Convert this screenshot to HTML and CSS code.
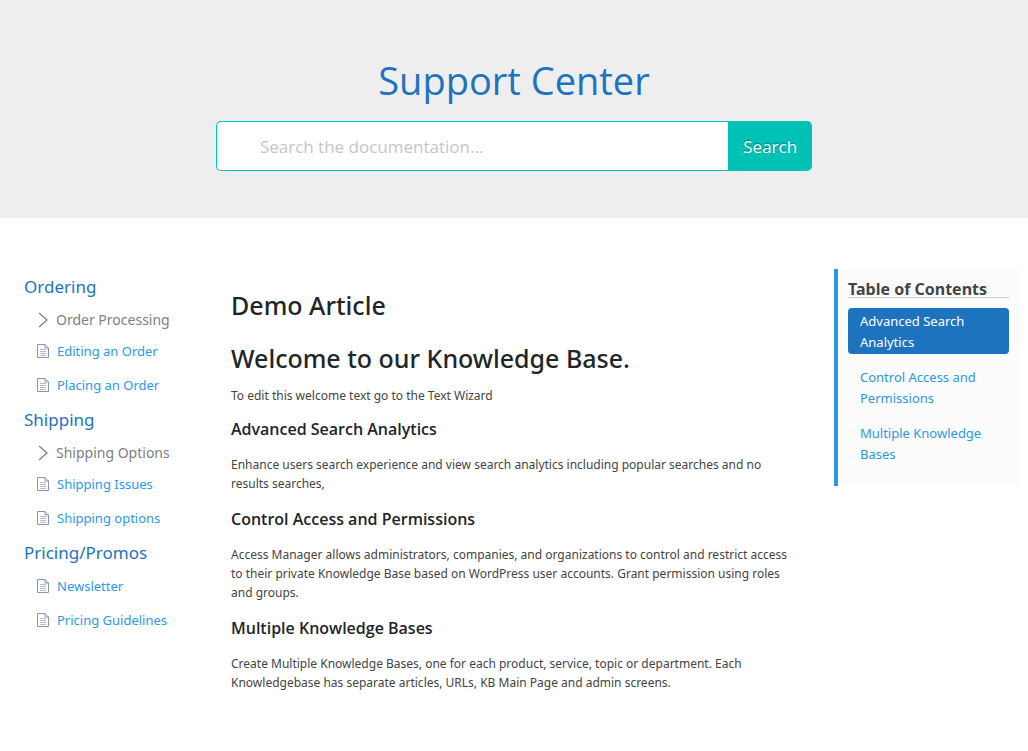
FILE: index.html
```html
<!DOCTYPE html>
<html lang="en">
<head>
<meta charset="utf-8">
<meta name="viewport" content="width=device-width, initial-scale=1">
<title>Support Center</title>
<link rel="stylesheet" href="styles.css">
</head>
<body>
<svg class="sprite" aria-hidden="true">
  <symbol id="doc" viewBox="0 0 12 14">
    <path d="M.5.5H8L11.500 4V13.500H.5Z M8 .5V4H11.500" fill="none" stroke="#8494c0"/>
    <path d="M3 5.500H9M3 7.500H9M3 9.500H9M3 11.500H9" fill="none" stroke="#b4bccb"/>
  </symbol>
  <symbol id="chevron" viewBox="0 0 10 16">
    <path d="M1 1L9 8L1 15" fill="none" stroke="#808080" stroke-width="1.300"/>
  </symbol>
</svg>
<header class="hero">
  <h1 class="hero-title">Support Center</h1>
  <form class="search" role="search">
    <input class="search-input" type="search" aria-label="Search the documentation" placeholder="Search the documentation...">
    <button class="search-button" type="submit">Search</button>
  </form>
</header>
<div class="layout">
  <nav class="sidebar" aria-label="Categories">
    <section>
      <h2 class="category">Ordering</h2>
      <button class="subcategory" type="button"><svg class="chevron"><use href="#chevron"/></svg>Order Processing</button>
      <a class="article-link" href="#"><svg class="doc"><use href="#doc"/></svg>Editing an Order</a>
      <a class="article-link" href="#"><svg class="doc"><use href="#doc"/></svg>Placing an Order</a>
    </section>
    <section>
      <h2 class="category">Shipping</h2>
      <button class="subcategory" type="button"><svg class="chevron"><use href="#chevron"/></svg>Shipping Options</button>
      <a class="article-link" href="#"><svg class="doc"><use href="#doc"/></svg>Shipping Issues</a>
      <a class="article-link" href="#"><svg class="doc"><use href="#doc"/></svg>Shipping options</a>
    </section>
    <section>
      <h2 class="category">Pricing/Promos</h2>
      <a class="article-link" href="#"><svg class="doc"><use href="#doc"/></svg>Newsletter</a>
      <a class="article-link" href="#"><svg class="doc"><use href="#doc"/></svg>Pricing Guidelines</a>
    </section>
  </nav>
  <main class="article">
    <h1 class="article-title">Demo Article</h1>
    <h2 class="article-title welcome">Welcome to our Knowledge Base.</h2>
    <p class="text intro">To edit this welcome text go to the Text Wizard</p>
    <h3 class="heading" id="analytics">Advanced Search Analytics</h3>
    <p class="text">Enhance users search experience and view search analytics including popular searches and no results searches,</p>
    <h3 class="heading" id="access">Control Access and Permissions</h3>
    <p class="text">Access Manager allows administrators, companies, and organizations to control and restrict access to their private Knowledge Base based on WordPress user accounts. Grant permission using roles and groups.</p>
    <h3 class="heading" id="multiple">Multiple Knowledge Bases</h3>
    <p class="text">Create Multiple Knowledge Bases, one for each product, service, topic or department. Each Knowledgebase has separate articles, URLs, KB Main Page and admin screens.</p>
  </main>
  <nav class="toc" aria-labelledby="toc-title">
    <h2 class="toc-title" id="toc-title">Table of Contents</h2>
    <a class="toc-link active" href="#analytics">Advanced Search Analytics</a>
    <a class="toc-link" href="#access">Control Access and Permissions</a>
    <a class="toc-link" href="#multiple">Multiple Knowledge Bases</a>
  </nav>
</div>
</body>
</html>
```
FILE: styles.css
```css
* { box-sizing: border-box; }
body {
  margin: 0;
  background: #fff;
  color: #212529;
  font-family: "Noto Sans", "Open Sans", sans-serif;
  font-size: 13px;
}
h1, h2, h3, p { margin: 0; font-weight: 400; }
a { text-decoration: none; }
.sprite { display: none; }

.hero {
  padding: 54px 0 47px;
  background: #eee;
}
.hero-title {
  margin-bottom: 15px;
  color: #1e73be;
  font-family: "Open Sans", sans-serif;
  font-size: 38px;
  line-height: 52px;
  text-align: center;
}
.search {
  display: flex;
  width: 58%;
  min-width: 280px;
  height: 50px;
  margin: 0 auto;
  font-family: "Open Sans", sans-serif;
}
.search-input {
  flex: 1;
  min-width: 0;
  padding: 0 43px;
  border: 1px solid #00c1b6;
  border-right: 0;
  border-radius: 5px 0 0 5px;
  background: #fff;
  color: #444;
  font: inherit;
  font-size: 17px;
}
.search-input::placeholder { color: #c6c6c6; opacity: 1; }
.search-button {
  padding: 0 15px;
  border: 0;
  border-radius: 0 5px 5px 0;
  background: #00c1b6;
  color: #fff;
  font: inherit;
  font-size: 17px;
  text-shadow: 0 -1px 1px rgba(0, 0, 0, .35);
}

.layout {
  display: grid;
  grid-template-columns: 183px minmax(0, 1fr) 186px;
  column-gap: 24px;
  align-items: start;
  padding: 51px 8px 48px 24px;
}
.category {
  padding-top: 2px;
  color: #1e73be;
  font-size: 17px;
  line-height: 32px;
}
.subcategory {
  display: flex;
  align-items: center;
  width: 100%;
  height: 31px;
  padding: 2px 0 0 14px;
  border: 0;
  background: none;
  color: #808080;
  font: inherit;
  font-size: 14px;
}
.chevron { width: 10px; height: 16px; margin-right: 8px; }
.article-link {
  display: flex;
  align-items: center;
  height: 34px;
  padding-left: 13px;
  color: #2c98f0;
  font-size: 13px;
}
.doc { width: 12px; height: 14px; margin-right: 8px; }

.article { padding: 17px 14px 0 0; }
.article-title {
  margin-bottom: 15px;
  font-size: 25px;
  font-weight: 500;
  line-height: 38px;
}
.welcome { margin-bottom: 9px; }
.text {
  margin-bottom: 14px;
  color: #444;
  font-size: 12px;
  line-height: 19px;
}
.intro { margin-bottom: 12px; }
.heading {
  margin-bottom: 14px;
  font-family: "Open Sans", sans-serif;
  font-size: 16px;
  font-weight: 600;
  line-height: 24px;
}

.toc {
  padding: 10px 11px 10px 10px;
  border-left: 4px solid #2b98e4;
  background: #fcfcfc;
}
.toc-title {
  margin-bottom: 10px;
  padding-top: 2px;
  border-bottom: 1px solid #ccc;
  color: #444;
  font-size: 16px;
  font-weight: 700;
  line-height: 16px;
}
.toc-link {
  display: block;
  margin-bottom: 10px;
  padding: 3px 12px 1px;
  border-radius: 4px;
  color: #2b98e4;
  font-size: 13px;
  line-height: 21px;
}
.toc-link.active { background: #1e73be; color: #fff; }
```
